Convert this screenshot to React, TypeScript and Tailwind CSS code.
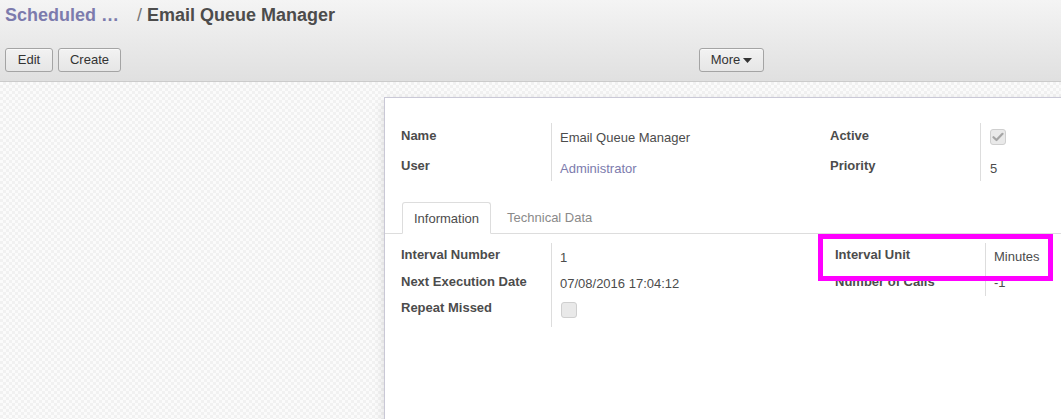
import React from "react";

function Row({
  label,
  h,
  lpt,
  vpt,
  children,
  lw = "w-[151px]",
  vpl = "pl-[8px]",
}: {
  label: string;
  h: string;
  lpt: string;
  vpt: string;
  children: React.ReactNode;
  lw?: string;
  vpl?: string;
}) {
  return (
    <div className={`flex ${h}`}>
      <div className={`${lw} shrink-0 border-r border-[#dddddd] ${lpt} font-bold leading-[18px] text-[#4c4c4c]`}>
        {label}
      </div>
      <div className={`${vpl} ${vpt} leading-[18px] text-[#4c4c4c]`}>{children}</div>
    </div>
  );
}

function Check({ checked }: { checked?: boolean }) {
  return (
    <div className="w-[16px] h-[16px] rounded-[3px] border border-[#cfcfcf] bg-[#e9e9e9] flex items-center justify-center">
      {checked && (
        <svg width="12" height="10" viewBox="0 0 12 10">
          <path d="M1.5 5.2 L4.5 8 L10.5 1.8" fill="none" stroke="#a5a5a5" strokeWidth="2.2" strokeLinecap="round" strokeLinejoin="round" />
        </svg>
      )}
    </div>
  );
}

function Btn({ children, w }: { children: React.ReactNode; w: string }) {
  return (
    <div
      className={`${w} h-[24px] rounded-[3px] border border-[#a4a4a4] bg-linear-to-b from-[#f2f2f2] to-[#e6e6e6] flex items-center justify-center text-[13px] text-[#333333] shadow-[inset_0_1px_0_rgba(255,255,255,0.6)]`}
    >
      {children}
    </div>
  );
}

export default function App() {
  return (
    <div className="w-[1061px] h-[419px] overflow-hidden font-['Liberation_Sans',Arial,sans-serif] text-[13px] bg-white">
      {/* header */}
      <div className="h-[82px] bg-linear-to-b from-[#f4f4f4] to-[#e0e0e0] border-b border-[#cbcbcb]">
        <div className="pt-[5px] pl-[5px] h-[48px] flex text-[18px] leading-[20px] font-bold whitespace-nowrap">
          <span className="text-[#7c7bad] w-[132px]">Scheduled …</span>
          <span className="font-normal text-[#777777]">/</span>
          <span className="text-[#4c4c4c] ml-[5px]">Email Queue Manager</span>
        </div>
        <div className="flex pl-[5px]">
          <div className="w-[694px] flex gap-[5px]">
            <Btn w="w-[48px]">Edit</Btn>
            <Btn w="w-[63px]">Create</Btn>
          </div>
          <Btn w="w-[65px]">
            <span>More</span>
            <svg className="ml-[3px] mt-[1px]" width="9" height="5" viewBox="0 0 9 5">
              <path d="M0 0 H9 L4.5 5 Z" fill="#333333" />
            </svg>
          </Btn>
        </div>
      </div>

      {/* main */}
      <div className="h-[337px] overflow-hidden pl-[384px] pt-[15px] bg-[image:repeating-conic-gradient(#f1f1f1_0%_25%,#fbfbfb_0%_50%)] bg-[length:6px_6px]">
        <div className="w-[900px] h-[400px] bg-white border-l border-t border-[#c9c8d6] shadow-[-4px_0_10px_-4px_rgba(0,0,0,0.12)] pt-[25px]">
          {/* top groups */}
          <div className="flex pl-[16px]">
            <div className="w-[429px]">
              <Row label="Name" h="h-[29px]" lpt="pt-[4px]" vpt="pt-[6px]">
                Email Queue Manager
              </Row>
              <Row label="User" h="h-[29px]" lpt="pt-[5px]" vpt="pt-[8px]">
                <span className="text-[#7c7bad]">Administrator</span>
              </Row>
            </div>
            <div>
              <Row label="Active" h="h-[29px]" lpt="pt-[4px]" vpt="pt-[6px]" vpl="pl-[9px]">
                <Check checked />
              </Row>
              <Row label="Priority" h="h-[29px]" lpt="pt-[5px]" vpt="pt-[8px]" vpl="pl-[9px]">
                5
              </Row>
            </div>
          </div>

          {/* tabs */}
          <div className="mt-[21px] border-b border-[#dddddd] flex items-end pl-[17px] h-[32px]">
            <div className="h-[32px] -mb-px px-[11px] pt-[1px] border border-[#dddddd] border-b-white bg-white rounded-t-[3px] flex items-center text-[#4c4c4c]">
              Information
            </div>
            <div className="h-[31px] ml-[4px] px-[12px] pt-[1px] flex items-center text-[#8a8a8a]">Technical Data</div>
          </div>

          {/* bottom groups */}
          <div className="flex pl-[16px] mt-[9px]">
            <div className="w-[434px]">
              <Row label="Interval Number" h="h-[27px]" lpt="pt-[3px]" vpt="pt-[6px]">
                1
              </Row>
              <Row label="Next Execution Date" h="h-[26px]" lpt="pt-[3px]" vpt="pt-[5px]">
                07/08/2016 17:04:12
              </Row>
              <Row label="Repeat Missed" h="h-[31px]" lpt="pt-[3px]" vpt="pt-[6px]" vpl="pl-[9px]">
                <Check />
              </Row>
            </div>
            <div>
              <Row label="Interval Unit" h="h-[27px]" lpt="pt-[3px]" vpt="pt-[5px]">
                Minutes
              </Row>
              <Row label="Number of Calls" h="h-[26px]" lpt="pt-[3px]" vpt="pt-[4px]">
                -1
              </Row>
            </div>
          </div>
        </div>
      </div>

      {/* highlight box */}
      <div className="absolute left-[818px] top-[234px] w-[235px] h-[47px] border-[5px] border-[#ff00ff] pointer-events-none" />
    </div>
  );
}
